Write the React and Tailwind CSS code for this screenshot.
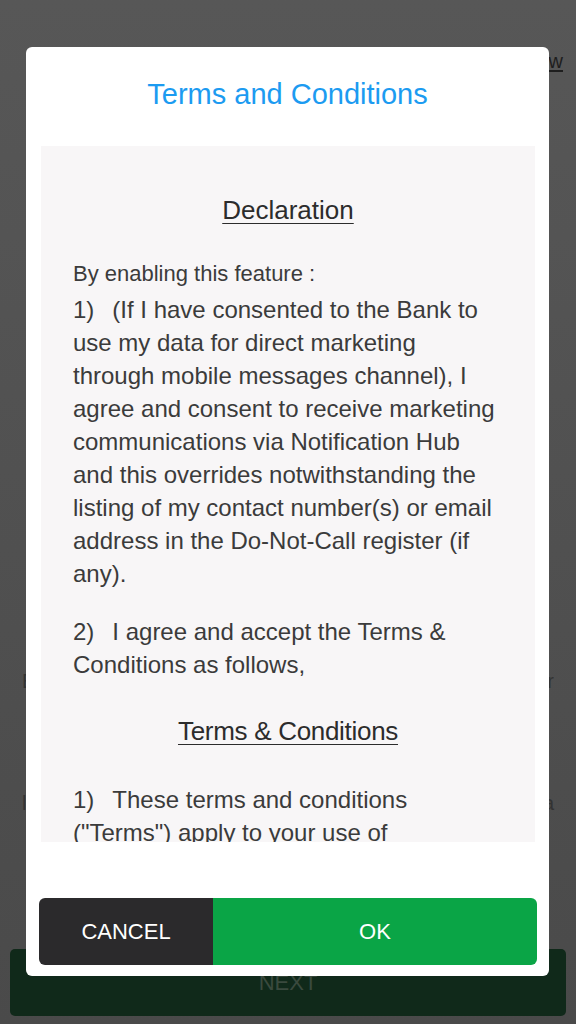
import React from 'react';

const font = { fontFamily: '"Liberation Sans", Arial, sans-serif' };

function Num({ children }) {
  return <span className="mr-[18px] inline-block">{children}</span>;
}

function BackgroundPage() {
  return (
    <div className="flex h-full flex-col bg-gradient-to-b from-[#575757] to-[#4a4a4a]">
      <div className="flex justify-end pr-[13px] pt-[46px]">
        <span className="text-[20px] text-[#1e1e1e] underline underline-offset-2">View</span>
      </div>
      <div className="mt-[590px] flex items-center justify-between px-[22px] text-[20px] text-[#333333]">
        <span>E</span>
        <span>r</span>
      </div>
      <div className="mt-[92px] flex items-center justify-between px-[22px] text-[20px] text-[#333333]">
        <span>l</span>
        <span>a</span>
      </div>
      <div className="mt-auto mx-[10px] mb-[8px] flex h-[67px] items-center justify-center rounded-[5px] bg-[#10291a]">
        <span className="text-[22px] text-[#3a4a3e]">NEXT</span>
      </div>
    </div>
  );
}

export default function App() {
  return (
    <div className="relative h-[1024px] w-[576px] overflow-hidden" style={font}>
      <BackgroundPage />

      <div className="absolute left-[26px] top-[47px] flex h-[929px] w-[523px] flex-col rounded-[6px] bg-white">
        <div className="flex h-[99px] items-center justify-center pb-[4px]">
          <h1 className="text-[29px] text-[#1c9bf1]">Terms and Conditions</h1>
        </div>

        <div className="ml-[15px] mr-[14px] h-[696px] overflow-hidden bg-[#f8f6f7] px-[32px] pt-[48px] text-[#3b3b3b]">
          <h2 className="text-center text-[26px] leading-[32px] text-[#2c2c2c] underline decoration-1 underline-offset-[4px]">
            Declaration
          </h2>

          <p className="mt-[31px] text-[22px] leading-[33px]">By enabling this feature :</p>
          <p className="mt-[3px] text-[24px] leading-[33px]">
            <Num>1)</Num>(If I have consented to the Bank to use my data for direct marketing through mobile
            messages channel), I agree and consent to receive marketing communications via Notification Hub
            and this overrides notwithstanding the listing of my contact number(s) or email address in the
            Do-Not-Call register (if any).
          </p>

          <p className="mt-[25px] text-[24px] leading-[33px]">
            <Num>2)</Num>I agree and accept the Terms &amp; Conditions as follows,
          </p>

          <h2 className="mt-[34px] text-center text-[26px] leading-[32px] tracking-[-0.3px] text-[#2c2c2c] underline decoration-1 underline-offset-[4px]">
            Terms &amp; Conditions
          </h2>

          <p className="mt-[36px] text-[24px] leading-[33px]">
            <Num>1)</Num>These terms and conditions ("Terms") apply to your use of Notification Hub
            service provided by the Bank.
          </p>
        </div>

        <div className="ml-[13px] mr-[12px] mt-[56px] flex h-[67px] overflow-hidden rounded-[6px]">
          <button className="flex w-[174px] items-center justify-center bg-[#2b2a2c] text-[22px] text-white">
            CANCEL
          </button>
          <button className="flex flex-1 items-center justify-center bg-[#0aa546] text-[22px] text-white">
            OK
          </button>
        </div>
      </div>
    </div>
  );
}
